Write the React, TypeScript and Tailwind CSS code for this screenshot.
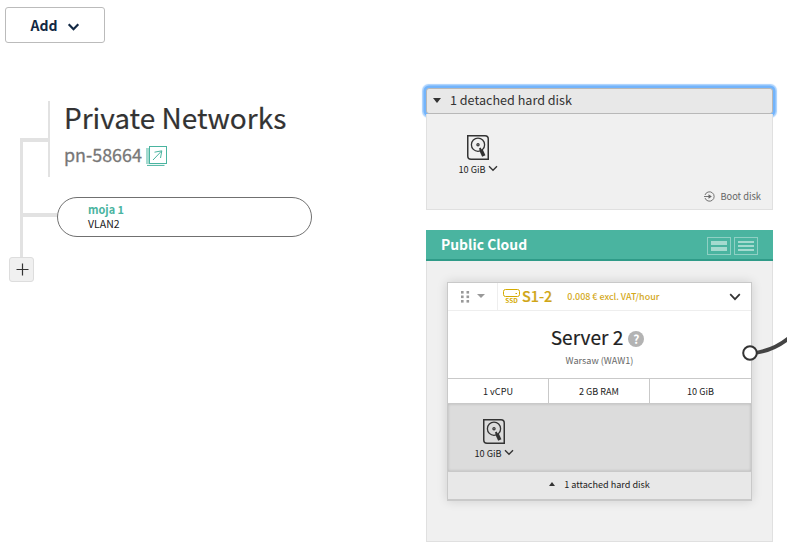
import React from "react";

const FONT = "font-['Noto_Sans_CJK_SC','Noto_Sans',sans-serif]";

function Chevron({ className, stroke = 2 }: { className: string; stroke?: number }) {
  return (
    <svg viewBox="0 0 12 8" className={className} fill="none" stroke="currentColor" strokeWidth={stroke}>
      <path d="M1.2 1.2 L6 6.2 L10.8 1.2" />
    </svg>
  );
}

function Disk() {
  return (
    <div className="flex w-[60px] flex-col items-center text-[#333]">
      <svg width="22" height="25" viewBox="0 0 22 25" fill="none" stroke="currentColor">
        <path d="M.75 .75 H18 Q21.25 .75 21.25 4 V24.25 H4 Q.75 24.25 .75 21 Z" strokeWidth="1.5" />
        <circle cx="11" cy="9.7" r="6.6" strokeWidth="1.3" />
        <circle cx="11" cy="9.7" r="1.7" fill="currentColor" stroke="none" />
        <circle cx="11" cy="9.7" r=".5" fill="#ddd" stroke="none" />
        <path d="M12.8 13 L14.2 16.2" strokeWidth="2" />
        <path d="M14 15 L16.8 21" strokeWidth="3.6" />
      </svg>
      <div className="mt-[3px] flex h-[12px] items-center gap-[2px]">
        <span className="text-[9.2px] leading-[12px] text-[#222]">10 GiB</span>
        <Chevron className="-mt-[1px] h-[7px] w-[10px]" stroke={1.6} />
      </div>
    </div>
  );
}

function NetworkTree() {
  return (
    <div className="mt-[58px]">
      <div className="flex h-[76px] pl-5">
        <div className="w-7 pt-[37px]">
          <div className="h-full border-t-4 border-l-[3px] border-[#e2e2e2]" />
        </div>
        <div className="w-0.5 bg-[#e2e2e2]" />
        <div className="pl-[14px]">
          <div className="-mt-0.5 text-[28px] leading-[36px] whitespace-nowrap text-[#333] [-webkit-text-stroke:0.2px_#333]">Private Networks</div>
          <div className="mt-[1px] flex h-[36px] items-center gap-1">
            <span className="text-[17.9px] leading-[36px] text-[#777] [-webkit-text-stroke:0.3px_#777]">pn-58664</span>
            <svg width="21" height="20" viewBox="0 0 21 20" className="mt-[3px]" fill="none" stroke="#4ab4a0">
              <path d="M0 2 H3 V18 H0 Z" fill="#a4dacf" stroke="none" />
              <path d="M1 19.4 H18.5" />
              <rect x="3.5" y=".5" width="17" height="17" />
              <path d="M7 14 L15.6 5 M8.5 6.2 L15.8 4.8 L14.5 12" />
            </svg>
          </div>
        </div>
      </div>
      <div className="flex h-20 pl-5">
        <div className="w-[37px] border-l-[3px] border-[#e2e2e2] pt-9">
          <div className="h-1 bg-[#e2e2e2]" />
        </div>
        <div className="mt-5 h-10 w-[255px] rounded-[20px] border border-[#707070] bg-white pt-[4px] pl-[30px] text-[10.5px] leading-[14px]">
          <div className="mb-[1px] text-[10.9px] font-bold text-[#4ab4a0]">moja 1</div>
          <div className="text-[#222]">VLAN2</div>
        </div>
      </div>
      <button className="ml-[9px] flex size-[25px] items-center justify-center rounded-[3px] border border-[#ddd] bg-[#f0f0f0] pl-[2px]">
        <svg width="13" height="13" viewBox="0 0 13 13" stroke="#333" strokeWidth="1.2">
          <path d="M6.5 .5 V12.5 M.5 6.5 H12.5" />
        </svg>
      </button>
    </div>
  );
}

function DetachedDisks() {
  return (
    <section className="h-[122px]">
      <button className="flex h-[26px] w-full items-center rounded-[3px] border border-[#b8b8b8] bg-[#e8e8e8] pl-[6px] shadow-[0_0_0_2.5px_#73b4fb,0_0_1px_3.5px_#a9d1fd]">
        <svg width="8" height="5" viewBox="0 0 8 5" fill="#333" className="-mt-[2px]"><path d="M0 0 H8 L4 5 Z" /></svg>
        <span className="-mt-[2px] ml-[9px] text-[12.6px] leading-[24px] text-[#333]">1 detached hard disk</span>
      </button>
      <div className="flex h-24 flex-col justify-between border border-t-0 border-[#e0e0e0] bg-[#f0f0f0] pt-[21px] pr-[11px] pb-[6px] pl-[21px]">
        <Disk />
        <div className="flex items-center justify-end text-[#666]">
          <svg width="11" height="11" viewBox="0 0 11 11" fill="none" stroke="currentColor" strokeWidth=".9">
            <path d="M1 4 A4.7 4.7 0 1 1 1 7" />
            <path d="M0 5.5 H6" />
            <path d="M4.5 3.3 L7.8 5.5 L4.5 7.7 Z" fill="currentColor" stroke="none" />
          </svg>
          <span className="ml-[5px] text-[9.3px] leading-[14px]">Boot disk</span>
        </div>
      </div>
    </section>
  );
}

function ServerCard() {
  return (
    <div className="relative flex h-[219px] w-[305px] flex-col border border-b-2 border-[#c9c9c9] bg-white shadow-[0_0_10px_rgba(0,0,0,0.14)]">
      <div className="flex h-7 shrink-0 items-center border-b border-[#eee]">
        <div className="flex h-full w-[50px] items-center border-r border-[#eee] pl-[13px]">
          <svg width="9" height="12" viewBox="0 0 9 12" fill="#999">
            {[0, 4.5, 9].map((y) => (
              <g key={y}>
                <rect x="0" y={y} width="2.6" height="2.6" />
                <rect x="5.5" y={y} width="2.6" height="2.6" />
              </g>
            ))}
          </svg>
          <svg width="8" height="4" viewBox="0 0 8 4" fill="#999" className="-mt-[2px] ml-[7px]"><path d="M0 0 H8 L4 4 Z" /></svg>
        </div>
        <div className="-mt-[1px] ml-[5px] flex w-[17px] flex-col items-center text-[#d4aa00]">
          <svg width="17" height="8" viewBox="0 0 17 8" fill="none" stroke="currentColor">
            <rect x=".5" y=".5" width="16" height="7" rx="2" />
            <path d="M12.5 4.5 H14" />
          </svg>
          <span className="text-[6.4px] leading-[7px] font-bold">SSD</span>
        </div>
        <span className="-mt-[2px] ml-[2px] text-[14.4px] leading-[27px] font-medium text-[#d0a617] [-webkit-text-stroke:0.2px_#d0a617]">S1-2</span>
        <span className="ml-[15px] text-[8.95px] leading-[27px] font-medium text-[#d4a91c]">0.008 € excl. VAT/hour</span>
        <Chevron className="mr-[10px] ml-auto h-[8px] w-[12px] text-[#333]" stroke={1.7} />
      </div>
      <div className="flex h-[67px] shrink-0 flex-col items-center pt-[13px]">
        <div className="flex h-[27px] items-center gap-[5px] pr-[4px]">
          <span className="text-[19.1px] leading-[27px] text-[#222] [-webkit-text-stroke:0.2px_#222]">Server 2</span>
          <span className="mt-[3px] flex size-4 items-center justify-center rounded-full bg-[#b3b3b3] text-[12px] leading-4 font-bold text-white">?</span>
        </div>
        <span className="mt-[3px] text-[9.1px] leading-[12px] text-[#666]">Warsaw (WAW1)</span>
      </div>
      <div className="grid h-[26px] shrink-0 grid-cols-[101px_101px_101px] border-y border-[#c9c9c9] text-center text-[9.1px] leading-[24px] text-[#222]">
        <span className="border-r border-[#c9c9c9]">1 vCPU</span>
        <span className="border-r border-[#c9c9c9]">2 GB RAM</span>
        <span>10 GiB</span>
      </div>
      <div className="h-[67px] shrink-0 bg-[#dcdcdc] pt-[15px] pl-4 shadow-[inset_0_0_3px_rgba(0,0,0,0.18)]">
        <Disk />
      </div>
      <div className="flex flex-1 items-center justify-center border-t border-[#c9c9c9] bg-[#e8e8e8] pb-[3px]">
        <svg width="6" height="4" viewBox="0 0 6 4" fill="#333"><path d="M0 4 H6 L3 0 Z" /></svg>
        <span className="ml-[9px] text-[9.1px] leading-[24px] text-[#222]">1 attached hard disk</span>
      </div>
      <svg width="46" height="32" viewBox="0 0 46 32" fill="none" className="absolute top-[50px] left-[294px]">
        <path d="M8 20.5 Q31 18.5 48 4" stroke="#444" strokeWidth="4" />
        <circle cx="8" cy="20" r="6.8" fill="white" stroke="#333" strokeWidth="2" />
      </svg>
    </div>
  );
}

function PublicCloud() {
  return (
    <section className="mt-5 h-[312px]">
      <header className="flex h-[31px] items-center border-b-2 border-[#2f9b88] bg-[#4ab4a0] pr-[15px] pl-[15px]">
        <span className="text-[13.9px] leading-[29px] font-bold text-white">Public Cloud</span>
        <div className="mt-[3px] ml-auto flex gap-[3px]">
          <svg width="24" height="18" viewBox="0 0 24 18" fill="#a4dacf">
            <rect x=".5" y=".5" width="23" height="17" fill="none" stroke="#8fd0c4" />
            <path d="M4 4 H20 V8 H4 Z M4 10 H20 V14 H4 Z" />
          </svg>
          <svg width="24" height="18" viewBox="0 0 24 18" fill="#a4dacf">
            <rect x=".5" y=".5" width="23" height="17" fill="none" stroke="#8fd0c4" />
            <path d="M4 4 H20 V6 H4 Z M4 8 H20 V10 H4 Z M4 12 H20 V14 H4 Z" />
          </svg>
        </div>
      </header>
      <div className="h-[281px] border border-t-0 border-[#e0e0e0] bg-[#f0f0f0] pt-[21px] pl-5">
        <ServerCard />
      </div>
    </section>
  );
}

export default function App() {
  return (
    <div className={`flex h-[550px] w-[787px] overflow-hidden bg-white ${FONT}`}>
      <div className="w-[426px] shrink-0 pt-[7px]">
        <button className="ml-[5px] flex h-9 w-[100px] items-center justify-center gap-[9px] rounded-[3px] border border-[#bbb] text-[#122844]">
          <span className="text-[14px] leading-[34px] font-bold">Add</span>
          <Chevron className="mt-[3px] h-[8px] w-[13px]" stroke={2.2} />
        </button>
        <NetworkTree />
      </div>
      <div className="w-[347px] shrink-0 pt-[88px]">
        <DetachedDisks />
        <PublicCloud />
      </div>
    </div>
  );
}
